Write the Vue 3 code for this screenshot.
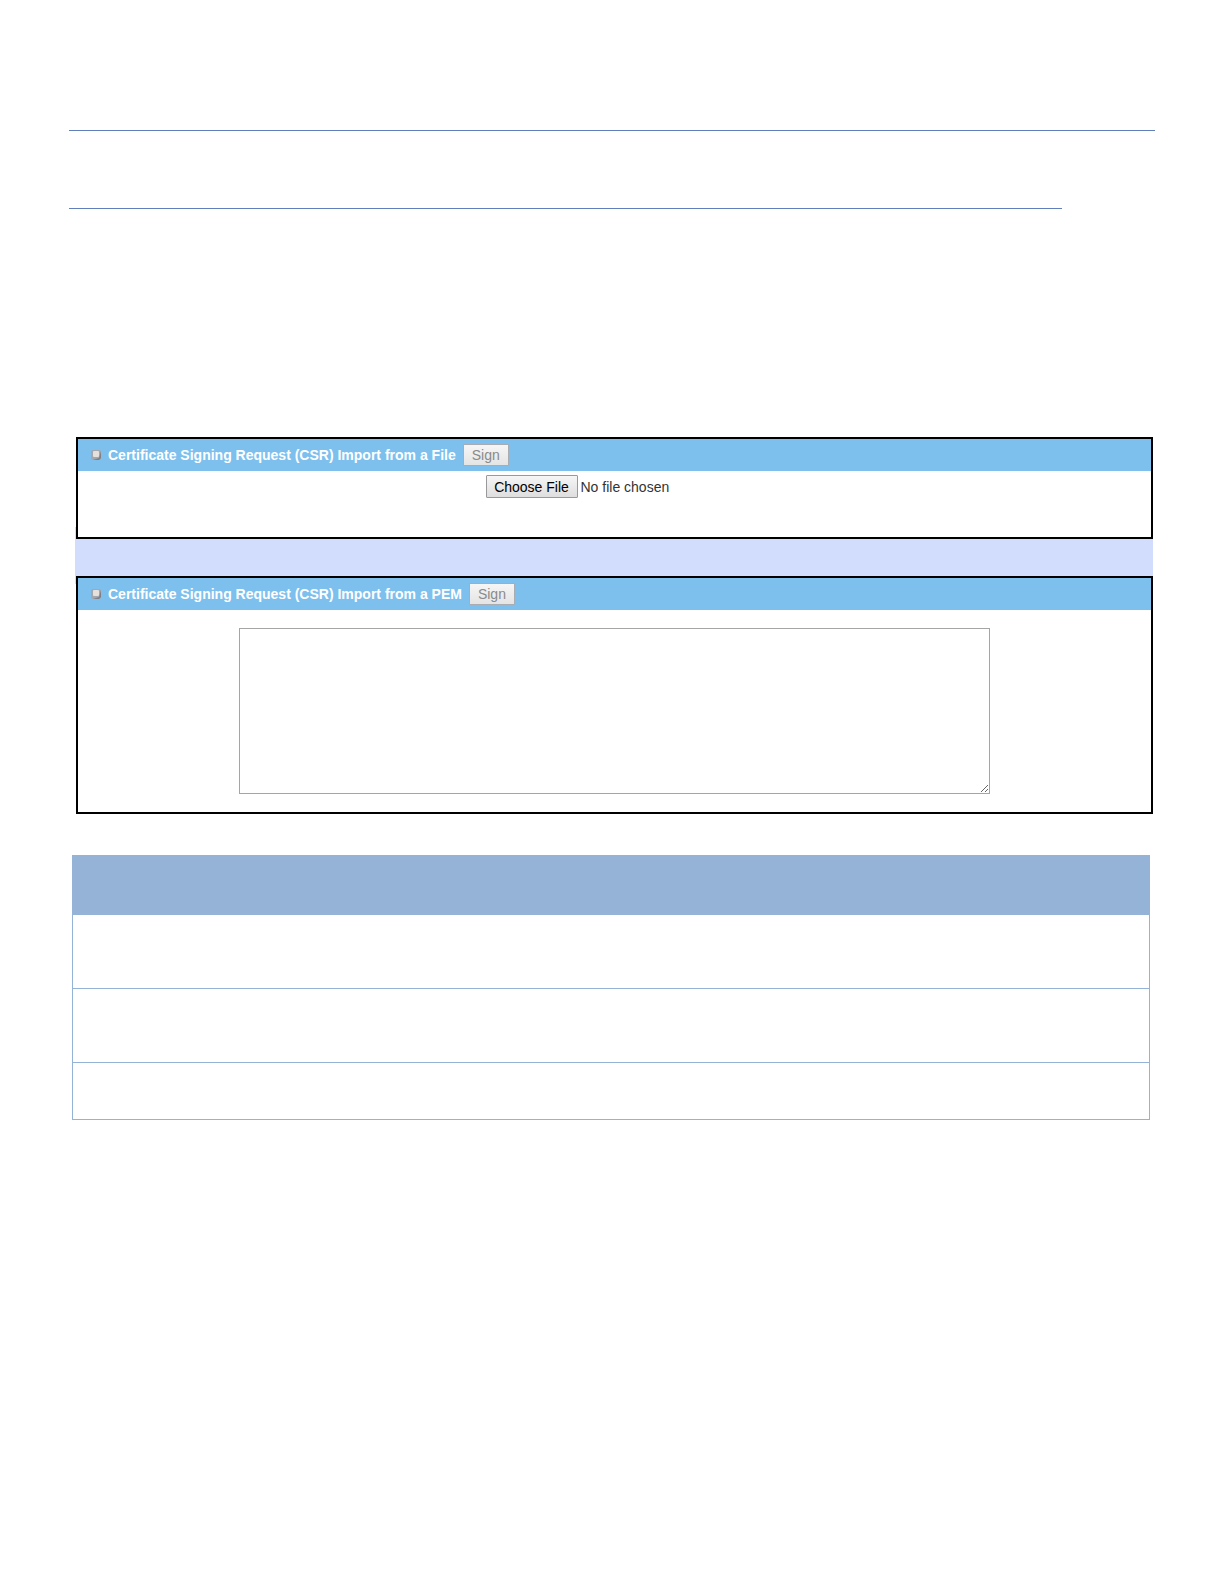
<template>
  <main class="page">
    <hr class="rule" />
    <hr class="rule rule-short" />

    <div class="import">
      <form class="panel" @submit.prevent>
        <div class="panel-header">
          <svg class="bullet" viewBox="0 0 12 12" aria-hidden="true">
            <rect x="1" y="1" width="10" height="10" rx="2" fill="#a3a7ae" />
            <path d="M11 2v7l-2 2H3l6-2z" fill="#7f7f88" />
            <rect x="3" y="2" width="6" height="6" rx="1" fill="#e6e0dc" />
          </svg>
          <label class="title" for="csr-file">Certificate Signing Request (CSR) Import from a File</label>
          <button class="sign" type="submit" :disabled="!fileName">Sign</button>
        </div>
        <div class="file-row">
          <input id="csr-file" class="file" type="file" @change="onFileChange" />
        </div>
      </form>

      <form class="panel" @submit.prevent>
        <div class="panel-header">
          <svg class="bullet" viewBox="0 0 12 12" aria-hidden="true">
            <rect x="1" y="1" width="10" height="10" rx="2" fill="#a3a7ae" />
            <path d="M11 2v7l-2 2H3l6-2z" fill="#7f7f88" />
            <rect x="3" y="2" width="6" height="6" rx="1" fill="#e6e0dc" />
          </svg>
          <label class="title" for="csr-pem">Certificate Signing Request (CSR) Import from a PEM</label>
          <button class="sign" type="submit" :disabled="!pem">Sign</button>
        </div>
        <div class="pem-row">
          <textarea id="csr-pem" v-model="pem" class="pem"></textarea>
        </div>
      </form>
    </div>

    <table class="items">
      <thead>
        <tr><th></th></tr>
      </thead>
      <tbody>
        <tr v-for="row in rows" :key="row.id" :class="row.size">
          <td></td>
        </tr>
      </tbody>
    </table>
  </main>
</template>

<script setup>
import { ref } from 'vue';

const fileName = ref('');
const pem = ref('');

const rows = [
  { id: 1, size: 'tall' },
  { id: 2, size: 'tall' },
  { id: 3, size: 'short' },
];

function onFileChange(event) {
  const file = event.target.files[0];
  fileName.value = file ? file.name : '';
}
</script>

<style>
body {
  margin: 0;
  background: #fff;
}
</style>

<style scoped>
.page {
  padding: 130px 69px;
  font-family: "Liberation Sans", Arial, sans-serif;
  font-size: 14px;
}

.rule {
  height: 1px;
  margin: 0;
  border: 0;
  background: #6180bb;
}

.rule-short {
  margin: 77px 93px 0 0;
}

/* the blue band shows only between the two panels */
.import {
  display: flex;
  flex-direction: column;
  gap: 37px;
  margin: 228px 2px 0 6px;
  background: linear-gradient(#fff, #fff) top / 100% 90px no-repeat, linear-gradient(#fff, #fff) bottom / 100% 230px no-repeat, #d2dcfc;
}

.panel {
  margin-left: 1px;
  border: 2px solid #000;
  background: #fff;
}

.panel-header {
  display: flex;
  align-items: center;
  height: 32px;
  padding-left: 12px;
  background: #7dc0ee;
}

.bullet {
  width: 12px;
  height: 12px;
  margin-right: 6px;
}

.title {
  color: #fff;
  font-weight: bold;
}

.sign {
  box-sizing: border-box;
  width: 46px;
  height: 22px;
  margin-left: 7px;
  padding: 0;
  border: 1px solid #a9adb2;
  border-radius: 1px;
  background: linear-gradient(#f6f6f6, #e4e4e4);
  color: #8a8a8a;
  font-family: inherit;
  font-size: 14px;
}

.file-row {
  display: flex;
  justify-content: center;
  box-sizing: border-box;
  height: 66px;
  padding-top: 4px;
}

.file {
  width: 258px;
  height: 24px;
  color: #333;
  font-family: inherit;
  font-size: 14px;
}

.file::file-selector-button {
  box-sizing: border-box;
  width: 92px;
  height: 23px;
  margin: 0 3px 0 0;
  padding: 0;
  border: 1px solid #999;
  border-radius: 1px;
  background: linear-gradient(#f6f6f6, #dedede);
  color: #000;
  font-family: inherit;
  font-size: 14px;
}

.pem-row {
  display: flex;
  justify-content: center;
  padding: 18px 0;
}

.pem {
  box-sizing: border-box;
  width: 70%;
  height: 166px;
  border: 1px solid #a5a5a5;
  outline: none;
  font-family: "Liberation Mono", monospace;
}

.items {
  width: calc(100% - 8px);
  margin: 41px 5px 0 3px;
  border-collapse: collapse;
}

.items th,
.items td {
  padding: 0;
  border: 1px solid #95b3d7;
}

.items th {
  height: 58px;
  background: #95b3d7;
}

.tall td {
  height: 73px;
}

.short td {
  height: 56px;
}
</style>
